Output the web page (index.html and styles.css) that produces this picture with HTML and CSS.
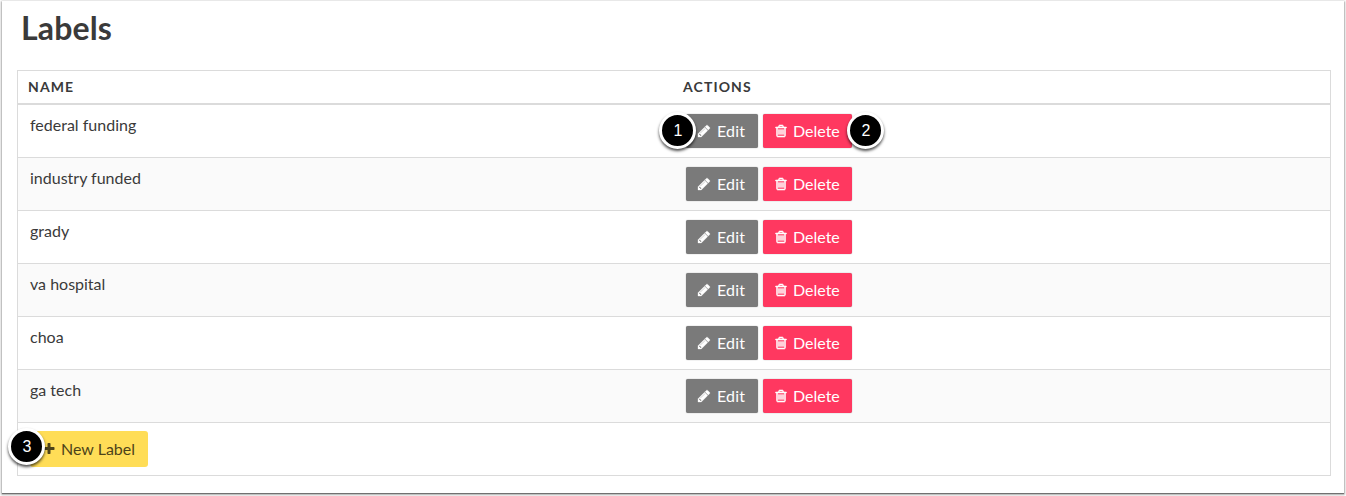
FILE: index.html
```html
<!DOCTYPE html>
<html lang="en">
<head>
<meta charset="utf-8">
<title>Labels</title>
<link rel="stylesheet" href="styles.css">
</head>
<body>
<svg class="sprite" aria-hidden="true">
  <symbol id="pencil" viewBox="0 0 1792 1792"><path d="M491 1536l91-91-235-235-91 91v107h128v128h107zm523-928q0-22-22-22-10 0-17 7l-542 542q-7 7-7 17 0 22 22 22 10 0 17-7l542-542q7-7 7-17zm-54-192l416 416-832 832h-416v-416zm683 96q0 53-37 90l-166 166-416-416 166-165q36-38 90-38 53 0 91 38l235 234q37 39 37 91z"/></symbol>
  <symbol id="trash" viewBox="0 0 1792 1792"><path d="M704 736v576q0 14-9 23t-23 9h-64q-14 0-23-9t-9-23v-576q0-14 9-23t23-9h64q14 0 23 9t9 23zm256 0v576q0 14-9 23t-23 9h-64q-14 0-23-9t-9-23v-576q0-14 9-23t23-9h64q14 0 23 9t9 23zm256 0v576q0 14-9 23t-23 9h-64q-14 0-23-9t-9-23v-576q0-14 9-23t23-9h64q14 0 23 9t9 23zm128 724v-948h-896v948q0 22 7 40.5t14.5 27 10.5 8.5h832q3 0 10.5-8.5t14.5-27 7-40.5zm-672-1076h448l-48-117q-7-9-17-11h-317q-10 2-17 11zm928 32v64q0 14-9 23t-23 9h-96v948q0 83-47 143.5t-113 60.5h-832q-66 0-113-58.5t-47-141.5v-952h-96q-14 0-23-9t-9-23v-64q0-14 9-23t23-9h309l70-167q15-37 54-63t79-26h320q40 0 79 26t54 63l70 167h309q14 0 23 9t9 23z"/></symbol>
  <symbol id="plus" viewBox="0 0 1792 1792"><path d="M1600 736v192q0 40-28 68t-68 28h-416v416q0 40-28 68t-68 28h-192q-40 0-68-28t-28-68v-416h-416q-40 0-68-28t-28-68v-192q0-40 28-68t68-28h416v-416q0-40 28-68t68-28h192q40 0 68 28t28 68v416h416q40 0 68 28t28 68z"/></symbol>
</svg>
<main class="card">
  <h1 class="title">Labels</h1>
  <div class="table">
    <div class="row head"><div>Name</div><div>Actions</div></div>
    <div class="row"><div class="name">federal funding</div><div class="actions">
      <a class="btn edit"><svg class="icon"><use href="#pencil"/></svg>Edit<span class="pin pin-edit">1</span></a>
      <a class="btn delete"><svg class="icon"><use href="#trash"/></svg>Delete<span class="pin pin-delete">2</span></a></div></div>
    <div class="row"><div class="name">industry funded</div><div class="actions">
      <a class="btn edit"><svg class="icon"><use href="#pencil"/></svg>Edit</a>
      <a class="btn delete"><svg class="icon"><use href="#trash"/></svg>Delete</a></div></div>
    <div class="row"><div class="name">grady</div><div class="actions">
      <a class="btn edit"><svg class="icon"><use href="#pencil"/></svg>Edit</a>
      <a class="btn delete"><svg class="icon"><use href="#trash"/></svg>Delete</a></div></div>
    <div class="row"><div class="name">va hospital</div><div class="actions">
      <a class="btn edit"><svg class="icon"><use href="#pencil"/></svg>Edit</a>
      <a class="btn delete"><svg class="icon"><use href="#trash"/></svg>Delete</a></div></div>
    <div class="row"><div class="name">choa</div><div class="actions">
      <a class="btn edit"><svg class="icon"><use href="#pencil"/></svg>Edit</a>
      <a class="btn delete"><svg class="icon"><use href="#trash"/></svg>Delete</a></div></div>
    <div class="row"><div class="name">ga tech</div><div class="actions">
      <a class="btn edit"><svg class="icon"><use href="#pencil"/></svg>Edit</a>
      <a class="btn delete"><svg class="icon"><use href="#trash"/></svg>Delete</a></div></div>
    <div class="foot">
      <a class="btn new"><svg class="icon"><use href="#plus"/></svg>New Label<span class="pin pin-new">3</span></a>
    </div>
  </div>
</main>
</body>
</html>
```
FILE: styles.css
```css
* { box-sizing: border-box; }
body {
  margin: 0;
  padding: 1px 2px 3px;
  height: 496px;
  overflow: hidden;
  background: #fff;
  color: #3a3a3a;
  font: 16px/24px Lato, "Liberation Sans", sans-serif;
}
.sprite { display: none; }
.card {
  height: 492px;
  padding: 0 13px 0 15px;
  background: #fff;
  box-shadow: 0 1px 1px rgba(0, 0, 0, .4), 0 1px 2px 1px rgba(0, 0, 0, .28);
}
.title {
  margin: 0;
  height: 69px;
  padding: 8px 0 0 4px;
  font-size: 32px;
  line-height: 38px;
  font-weight: 700;
  letter-spacing: .15px;
}
.table { border: 1px solid #dbdbdb; }
.row {
  display: grid;
  grid-template-columns: 655px 1fr;
  height: 53px;
  padding-left: 12px;
  border-bottom: 1px solid #dbdbdb;
}
.row:nth-child(odd) { background: #fafafa; }
.head.row {
  height: 34px;
  padding-left: 10px;
  border-bottom-width: 2px;
  background: #fff;
  font-size: 14px;
  line-height: 32px;
  font-weight: 700;
  letter-spacing: 1.1px;
  text-transform: uppercase;
}
.name { padding-top: 8px; }
.actions { display: flex; gap: 5px; padding: 9px 0 0 1px; }
.btn {
  position: relative;
  display: flex;
  align-items: center;
  width: 72px;
  height: 34px;
  padding-left: 11px;
  border-radius: 2px;
  color: #fff;
  white-space: nowrap;
  box-shadow: 0 0 1px rgba(0, 0, 0, .5);
}
.icon { flex: none; width: 14px; height: 14px; margin-right: 6px; fill: currentColor; }
.edit { background: #7a7a7a; letter-spacing: .15px; }
.edit .icon { stroke: currentColor; stroke-width: 40px; }
.delete { width: 89px; padding-left: 10.5px; background: #ff3860; }
.delete .icon { margin-right: 5.5px; stroke: currentColor; stroke-width: 70px; }
.foot { height: 52px; padding: 8px 0 0 12px; }
.new {
  width: 118px;
  height: 36px;
  padding-left: 12px;
  border-radius: 3px;
  background: #ffdd57;
  color: #4d431a;
  box-shadow: none;
}
.new .icon { margin-right: 5px; }
.pin {
  position: absolute;
  width: 37px;
  height: 37px;
  padding-left: 1px;
  border: 3px solid #fff;
  border-radius: 50%;
  background: #000;
  color: #fff;
  font: 16px/31px "Liberation Sans", Arial, sans-serif;
  letter-spacing: 0;
  text-align: center;
  box-shadow: 0 2px 3px rgba(0, 0, 0, .7);
}
.pin-edit { left: -27px; top: -2px; }
.pin-delete { left: 84px; top: -2px; }
.pin-new { left: -22px; top: -3px; }
```
